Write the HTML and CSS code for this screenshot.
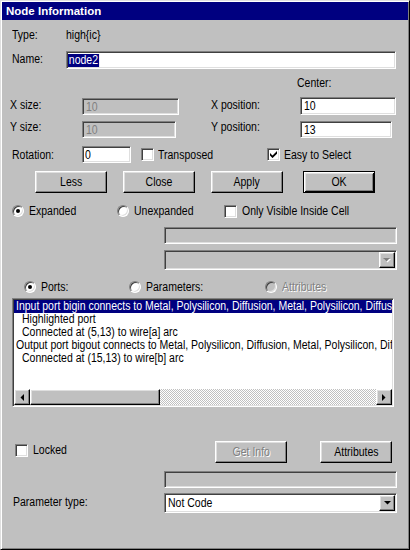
FILE: index.html
```html
<!DOCTYPE html>
<html>
<head>
<meta charset="utf-8">
<title>Node Information</title>
<link rel="stylesheet" href="styles.css">
</head>
<body>
<div class="window">
  <div class="titlebar">Node Information</div>
  <div class="content">
    <div class="row row-type">
      <span class="label w54"><span class="t">Type:</span></span><span class="t">high{ic}</span>
    </div>
    <div class="row row-name">
      <span class="label w54 up3"><span class="t">Name:</span></span>
      <div class="field sunken name-field"><span class="selected t">node2</span></div>
    </div>
    <div class="row row-center"><span class="t">Center:</span></div>
    <div class="row row-x">
      <span class="label w72 up3"><span class="t">X size:</span></span>
      <div class="field sunken disabled xsize"><span class="t">10</span></div>
      <span class="label pos-label up3 ml32"><span class="t">X position:</span></span>
      <div class="field sunken xpos"><span class="t">10</span></div>
    </div>
    <div class="row row-y">
      <span class="label w72 up6"><span class="t">Y size:</span></span>
      <div class="field sunken disabled ysize"><span class="t">10</span></div>
      <span class="label pos-label up6 ml35"><span class="t">Y position:</span></span>
      <div class="field sunken ypos"><span class="t">13</span></div>
    </div>
    <div class="row row-rot">
      <span class="label w70"><span class="t">Rotation:</span></span>
      <div class="field sunken rot"><span class="t">0</span></div>
      <div class="opt opt-transposed gap4">
        <span class="check sunken"></span><span class="t">Transposed</span>
      </div>
      <div class="opt gap4">
        <span class="check sunken"><svg width="7" height="7" viewBox="0 0 7 7"><path d="M0 2 L2.5 4.5 L7 0 V2.7 L2.6 7 H2.4 L0 4.6 Z" fill="#000"/></svg></span><span class="t">Easy to Select</span>
      </div>
    </div>
    <div class="row row-buttons">
      <div class="btn raised"><span class="t">Less</span></div>
      <div class="btn raised ml16"><span class="t">Close</span></div>
      <div class="btn raised ml16"><span class="t">Apply</span></div>
      <div class="btn default ml20"><span class="t">OK</span></div>
    </div>
    <div class="row row-expanded">
      <div class="opt opt-exp"><span class="radio on"></span><span class="t">Expanded</span></div>
      <div class="opt opt-unexp"><span class="radio"></span><span class="t">Unexpanded</span></div>
      <div class="opt"><span class="check sunken"></span><span class="t">Only Visible Inside Cell</span></div>
    </div>
    <div class="row row-dis1">
      <div class="wide sunken disabled-box"></div>
    </div>
    <div class="row row-combo1">
      <div class="combo sunken disabled-box">
        <span class="dd raised"><svg width="8" height="5" viewBox="0 0 8 5"><polygon points="1,1 8,1 4.5,4.5" fill="#fff"/><polygon points="0,0 7,0 3.5,3.5" fill="#808080"/></svg></span>
      </div>
    </div>
    <div class="row row-ports">
      <div class="opt opt-ports"><span class="radio on"></span><span class="t">Ports:</span></div>
      <div class="opt opt-params"><span class="radio"></span><span class="t">Parameters:</span></div>
      <div class="opt"><span class="radio disabled-radio"></span><span class="t disabled-text">Attributes</span></div>
    </div>
    <div class="listbox sunken">
      <div class="list-lines">
        <div class="lrow sel"><span class="t">Input port bigin connects to Metal, Polysilicon, Diffusion, Metal, Polysilicon, Diffusion</span></div>
        <div class="lrow ind"><span class="t">Highlighted port</span></div>
        <div class="lrow ind"><span class="t">Connected at (5,13) to wire[a] arc</span></div>
        <div class="lrow"><span class="t">Output port bigout connects to Metal, Polysilicon, Diffusion, Metal, Polysilicon, Diffusion</span></div>
        <div class="lrow ind"><span class="t">Connected at (15,13) to wire[b] arc</span></div>
      </div>
      <div class="hscroll">
        <span class="sb-btn raised"><svg width="4" height="7" viewBox="0 0 4 7"><polygon points="4,0 4,7 0.5,3.5" fill="#000"/></svg></span>
        <span class="thumb raised"></span>
        <span class="track"></span>
        <span class="sb-btn raised"><svg width="4" height="7" viewBox="0 0 4 7"><polygon points="0,0 0,7 3.5,3.5" fill="#000"/></svg></span>
      </div>
    </div>
    <div class="row row-locked">
      <div class="opt opt-locked up3"><span class="check sunken"></span><span class="t">Locked</span></div>
      <div class="btn raised"><span class="t disabled-text">Get Info</span></div>
      <div class="btn raised ml33"><span class="t">Attributes</span></div>
    </div>
    <div class="row row-dis2">
      <div class="wide sunken disabled-box"></div>
    </div>
    <div class="row row-param">
      <span class="label param-label up2"><span class="t">Parameter type:</span></span>
      <div class="combo sunken white">
        <span class="combo-text"><span class="t">Not Code</span></span>
        <span class="dd raised"><svg width="7" height="4" viewBox="0 0 7 4"><polygon points="0,0 7,0 3.5,3.5" fill="#000"/></svg></span>
      </div>
    </div>
  </div>
</div>
</body>
</html>
```

FILE: styles.css
```css
* { box-sizing: border-box; }
html, body { margin: 0; padding: 0; }
body {
  width: 410px;
  height: 550px;
  overflow: hidden;
  background: #c0c0c0;
  font-family: "Liberation Sans", Arial, sans-serif;
  font-size: 12.5px;
  color: #000;
}
/* narrow (Arial Narrow-like) text rendering */
.t {
  display: inline-block;
  white-space: nowrap;
  transform: scaleX(0.84);
  transform-origin: 0 50%;
}
.btn .t { transform-origin: 50% 50%; }

.window {
  width: 410px;
  height: 550px;
  border: 1px solid;
  border-color: #dfdfdf #000 #000 #dfdfdf;
  box-shadow: inset 1px 1px #fff, inset -1px -1px #808080;
  padding: 1px;
  background: #c0c0c0;
  display: flex;
  flex-direction: column;
}
.titlebar {
  height: 18px;
  flex: none;
  background: #000080;
  color: #fff;
  font-weight: bold;
  font-size: 11.5px;
  line-height: 18px;
  padding-left: 4px;
}
.content { display: flex; flex-direction: column; }
.row { display: flex; align-items: center; white-space: nowrap; flex: none; }

.sunken {
  border: 1px solid;
  border-color: #808080 #fff #fff #808080;
  box-shadow: inset 1px 1px #404040, inset -1px -1px #dfdfdf;
}
.raised {
  border: 1px solid;
  border-color: #fff #000 #000 #fff;
  box-shadow: inset -1px -1px #808080, inset 1px 1px #dfdfdf;
  background: #c0c0c0;
}

.label { flex: none; }
.w54 { width: 54px; }
.w70 { width: 70px; }
.w72 { width: 72px; }
.pos-label { width: 89px; }
.up2 { margin-bottom: 2px; }
.up3 { margin-bottom: 3px; }
.up6 { margin-bottom: 6px; }
.ml16 { margin-left: 16px; }
.ml20 { margin-left: 20px; }
.ml32 { margin-left: 32px; }
.ml33 { margin-left: 33px; }
.ml35 { margin-left: 35px; }

.row-type { margin-top: 6px; height: 18px; padding-left: 10px; }
.row-name { margin-top: 7px; height: 18px; padding-left: 10px; }
.row-center { margin-top: 7px; height: 14px; padding-left: 295px; }
.row-x { margin-top: 7px; height: 18px; padding-left: 8px; }
.row-y { margin-top: 6px; height: 17px; padding-left: 8px; }
.row-rot { margin-top: 8px; height: 17px; padding-left: 10px; }
.row-buttons { margin-top: 8px; height: 22px; padding-left: 33px; }
.row-expanded { margin-top: 11px; height: 14px; padding-left: 10px; }
.row-dis1 { margin-top: 9px; height: 17px; padding-left: 162px; }
.row-combo1 { margin-top: 6px; height: 20px; padding-left: 162px; }
.row-ports { margin-top: 10px; height: 14px; padding-left: 22px; }
.row-locked { margin-top: 33px; height: 23px; padding-left: 13px; }
.row-dis2 { margin-top: 8px; height: 17px; padding-left: 162px; }
.row-param { margin-top: 5px; height: 20px; padding-left: 11px; }

.field {
  height: 17px;
  background: #fff;
  padding-left: 3px;
  display: flex;
  align-items: center;
  flex: none;
  overflow: hidden;
}
.field.disabled { background: #c0c0c0; color: #808080; }
.name-field { width: 330px; height: 18px; padding-left: 1px; }
.selected {
  background: #000080;
  color: #fff;
  height: 13px;
  line-height: 13px;
  padding: 0 1px 0 1px;
}
.xsize { width: 97px; height: 17px; align-self: flex-end; }
.xpos { width: 96px; height: 18px; }
.ysize { width: 94px; }
.ypos { width: 92px; }
.rot { width: 49px; padding-left: 2px; }

.opt { display: flex; align-items: center; gap: 5px; flex: none; }
.gap4 { gap: 4px; }
.opt-transposed { margin-left: 10px; width: 126px; }
.opt-exp { width: 105px; }
.opt-unexp { width: 107px; }
.opt-ports { width: 105px; }
.opt-params { width: 136px; }
.opt-locked { width: 200px; }

.check {
  width: 13px;
  height: 13px;
  background: #fff;
  flex: none;
  display: flex;
  align-items: center;
  justify-content: center;
}
.check svg { display: block; }
.radio {
  width: 12px;
  height: 12px;
  border-radius: 50%;
  background: #fff;
  border: 1px solid;
  border-color: #808080 #fff #fff #808080;
  box-shadow: inset 1px 1px #404040, inset -1px -1px #dfdfdf;
  position: relative;
  flex: none;
}
.radio.on::after {
  content: "";
  position: absolute;
  left: 3px;
  top: 3px;
  width: 4px;
  height: 4px;
  border-radius: 50%;
  background: #000;
}
.radio.disabled-radio { background: #c0c0c0; }
.disabled-text { color: #808080; text-shadow: 1px 1px #fff; }

.btn {
  width: 72px;
  height: 22px;
  display: flex;
  align-items: center;
  justify-content: center;
  flex: none;
}
.btn.default {
  border: 1px solid #000;
  background: #c0c0c0;
  box-shadow: inset 1px 1px #fff, inset -1px -1px #000, inset 2px 2px #dfdfdf, inset -2px -2px #808080;
}

.wide { width: 233px; height: 17px; }
.disabled-box { background: #c0c0c0; }
.combo {
  width: 233px;
  height: 20px;
  display: flex;
  align-items: center;
  padding-left: 3px;
  flex: none;
}
.combo.white { background: #fff; }
.combo-text { flex: 1; }
.dd {
  margin-left: auto;
  margin-right: 1px;
  width: 16px;
  height: 16px;
  display: flex;
  align-items: center;
  justify-content: center;
  flex: none;
}
.dd svg, .sb-btn svg { display: block; }
.param-label { width: 151px; }

.listbox {
  margin-top: 4px;
  margin-left: 10px;
  width: 382px;
  height: 109px;
  background: #fff;
  padding: 1px;
  display: flex;
  flex-direction: column;
  flex: none;
}
.list-lines { flex: 1; overflow: hidden; }
.lrow {
  height: 13px;
  line-height: 13px;
  padding-left: 2px;
  white-space: nowrap;
  overflow: hidden;
}
.lrow.sel { background: #000080; color: #fff; }
.lrow.ind { padding-left: 8px; }
.hscroll {
  height: 16px;
  display: flex;
  flex: none;
  background-color: #fff;
  background-image: repeating-conic-gradient(#c0c0c0 0% 25%, #fff 0% 50%);
  background-size: 2px 2px;
}
.sb-btn {
  width: 16px;
  height: 16px;
  display: flex;
  align-items: center;
  justify-content: center;
  flex: none;
}
.thumb { width: 130px; height: 16px; flex: none; }
.track { flex: 1; }
```
